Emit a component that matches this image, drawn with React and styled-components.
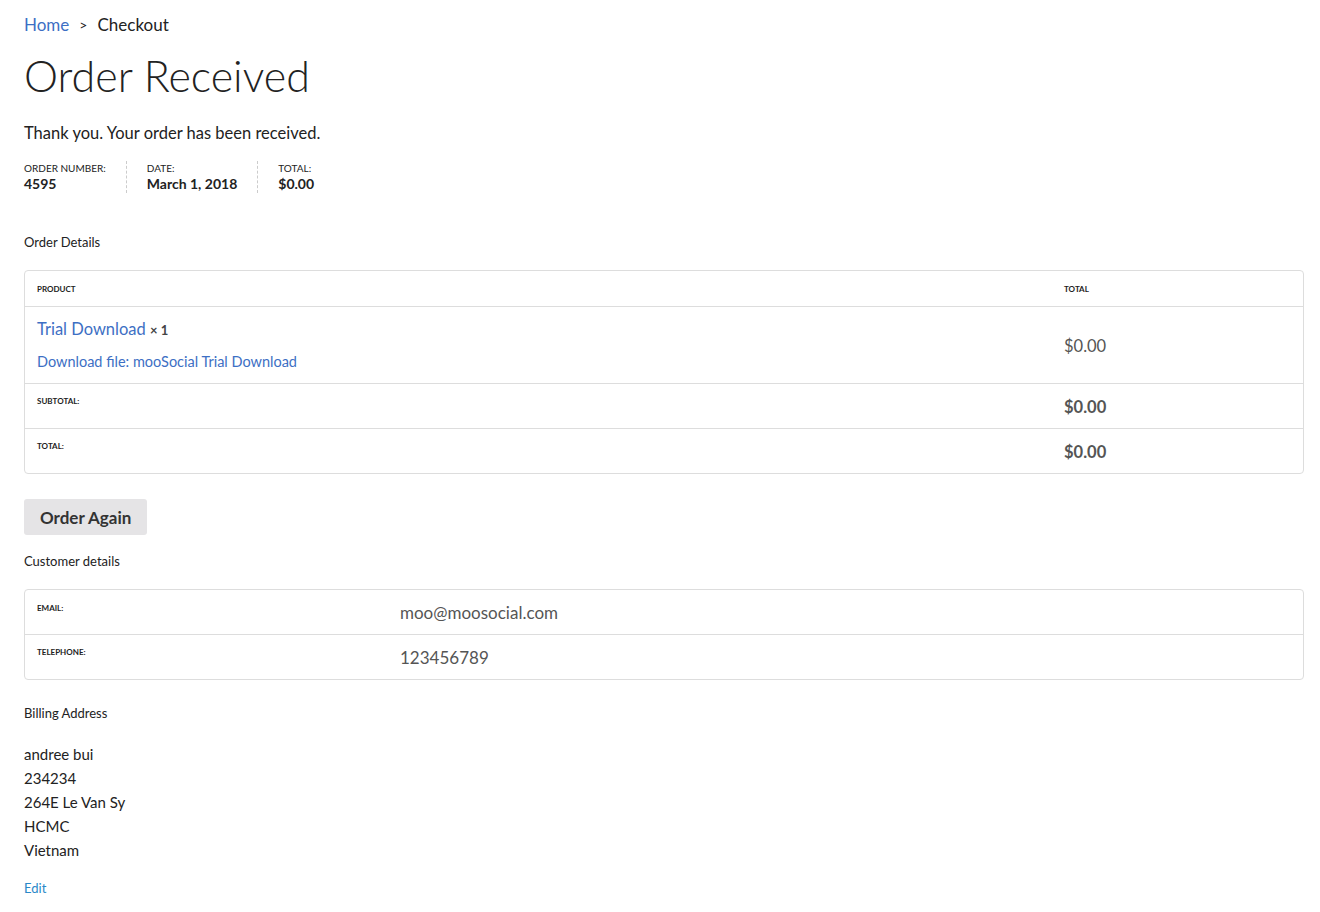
import React from 'react'
import styled, { createGlobalStyle } from 'styled-components'

const GlobalStyle = createGlobalStyle`
    body {
        margin: 0;
        background: #fff;
        font-family: Lato, "Open Sans", sans-serif;
        color: #222;
    }
`

const Page = styled.div`
    padding: 12px 16px 20px 24px;
`

const Breadcrumb = styled.div`
    font-size: 17px;
    color: #222;
    display: flex;
    align-items: center;
    gap: 10px;
    height: 24px;
`

const Link = styled.a`
    color: ${props => props.light ? '#2a88c8' : '#3d6fc4'};
    text-decoration: none;
    cursor: pointer;
`

const Sep = styled.span`
    font-size: 14px;
`

const Title = styled.h1`
    font-size: 43px;
    font-weight: 300;
    margin: 12px 0 0;
    line-height: 56px;
    color: #222;
`

const Thanks = styled.p`
    font-size: 16.5px;
    margin: 19px 0 0;
    line-height: 20px;
`

const Overview = styled.ul`
    list-style: none;
    display: flex;
    margin: 18px 0 0;
    padding: 0;
`

const OverviewItem = styled.li`
    font-size: 10px;
    text-transform: uppercase;
    color: #222;
    padding: 0 20px;
    border-right: 1px dashed #ccc;
    line-height: 14px;
    &:first-child { padding-left: 0; }
    &:last-child { border-right: 0; }
`

const OverviewValue = styled.strong`
    display: block;
    text-transform: none;
    font-size: 14px;
    font-weight: 700;
    line-height: 18px;
`

const SectionTitle = styled.h2`
    font-size: 13px;
    font-weight: 400;
    margin: ${props => props.top || 40}px 0 0;
    line-height: 18px;
`

const Table = styled.table`
    width: 100%;
    border-collapse: separate;
    border-spacing: 0;
    border: 1px solid #ddd;
    border-radius: 4px;
    margin-top: 19px;
    table-layout: fixed;
`

const Th = styled.th`
    box-sizing: border-box;
    text-align: left;
    font-size: 8px;
    font-weight: 700;
    text-transform: uppercase;
    padding: 0 12px;
    height: 35px;
    color: #222;
    width: ${props => props.w || 'auto'};
`

const Td = styled.td`
    box-sizing: border-box;
    border-top: ${props => props.first ? 0 : '1px solid #ddd'};
    padding: ${props => props.pad || '0 12px'};
    vertical-align: ${props => props.top ? 'top' : 'middle'};
    height: ${props => props.h || 45}px;
    font-size: 17px;
    color: #555;
`

const RowLabel = styled.th`
    box-sizing: border-box;
    border-top: ${props => props.first ? 0 : '1px solid #ddd'};
    text-align: left;
    font-size: 8px;
    font-weight: 700;
    text-transform: uppercase;
    vertical-align: top;
    padding: ${props => props.first ? 13 : 12}px 12px 0;
    height: ${props => props.first ? 44 : 45}px;
    color: #222;
    width: ${props => props.w || 'auto'};
`

const ProductName = styled.div`
    font-size: 16.5px;
    line-height: 22px;
`

const Qty = styled.strong`
    font-size: 13px;
    color: #444;
`

const DownloadLink = styled.div`
    font-size: 14.5px;
    line-height: 18px;
    margin-top: 12px;
`

const Amount = styled.span`
    font-size: 16.5px;
    font-weight: ${props => props.bold ? 700 : 400};
    color: #555;
`

const Button = styled.button`
    margin-top: 25px;
    font-family: inherit;
    font-size: 17px;
    font-weight: 700;
    color: #333;
    background: #e5e4e6;
    border: 0;
    border-radius: 3px;
    padding: 0 16px;
    height: 36px;
    cursor: pointer;
`

const Address = styled.address`
    font-style: normal;
    font-size: 15px;
    line-height: 24px;
    margin-top: 20px;
`

const EditLink = styled.div`
    font-size: 13px;
    margin-top: 18px;
`

const App = () => {
    return (
        <Page>
            <GlobalStyle />
            <Breadcrumb>
                <Link>Home</Link>
                <Sep>&gt;</Sep>
                <span>Checkout</span>
            </Breadcrumb>
            <Title>Order Received</Title>
            <Thanks>Thank you. Your order has been received.</Thanks>
            <Overview>
                <OverviewItem>Order number:<OverviewValue>4595</OverviewValue></OverviewItem>
                <OverviewItem>Date:<OverviewValue>March 1, 2018</OverviewValue></OverviewItem>
                <OverviewItem>Total:<OverviewValue>$0.00</OverviewValue></OverviewItem>
            </Overview>

            <SectionTitle top={40}>Order Details</SectionTitle>
            <Table>
                <thead>
                    <tr>
                        <Th w="1027px">Product</Th>
                        <Th>Total</Th>
                    </tr>
                </thead>
                <tbody>
                    <tr>
                        <Td h={77} top pad="11px 12px 0">
                            <ProductName>
                                <Link>Trial Download</Link> <Qty>&times; 1</Qty>
                            </ProductName>
                            <DownloadLink>
                                <Link>Download file: mooSocial Trial Download</Link>
                            </DownloadLink>
                        </Td>
                        <Td h={77}><Amount>$0.00</Amount></Td>
                    </tr>
                </tbody>
                <tfoot>
                    <tr>
                        <RowLabel>Subtotal:</RowLabel>
                        <Td><Amount bold>$0.00</Amount></Td>
                    </tr>
                    <tr>
                        <RowLabel>Total:</RowLabel>
                        <Td><Amount bold>$0.00</Amount></Td>
                    </tr>
                </tfoot>
            </Table>

            <Button>Order Again</Button>

            <SectionTitle top={17}>Customer details</SectionTitle>
            <Table>
                <tbody>
                    <tr>
                        <RowLabel first w="363px">Email:</RowLabel>
                        <Td first h={44}>moo@moosocial.com</Td>
                    </tr>
                    <tr>
                        <RowLabel>Telephone:</RowLabel>
                        <Td>123456789</Td>
                    </tr>
                </tbody>
            </Table>

            <SectionTitle top={24}>Billing Address</SectionTitle>
            <Address>
                andree bui<br />
                234234<br />
                264E Le Van Sy<br />
                HCMC<br />
                Vietnam
            </Address>
            <EditLink><Link light>Edit</Link></EditLink>
        </Page>
    )
}

export default App
